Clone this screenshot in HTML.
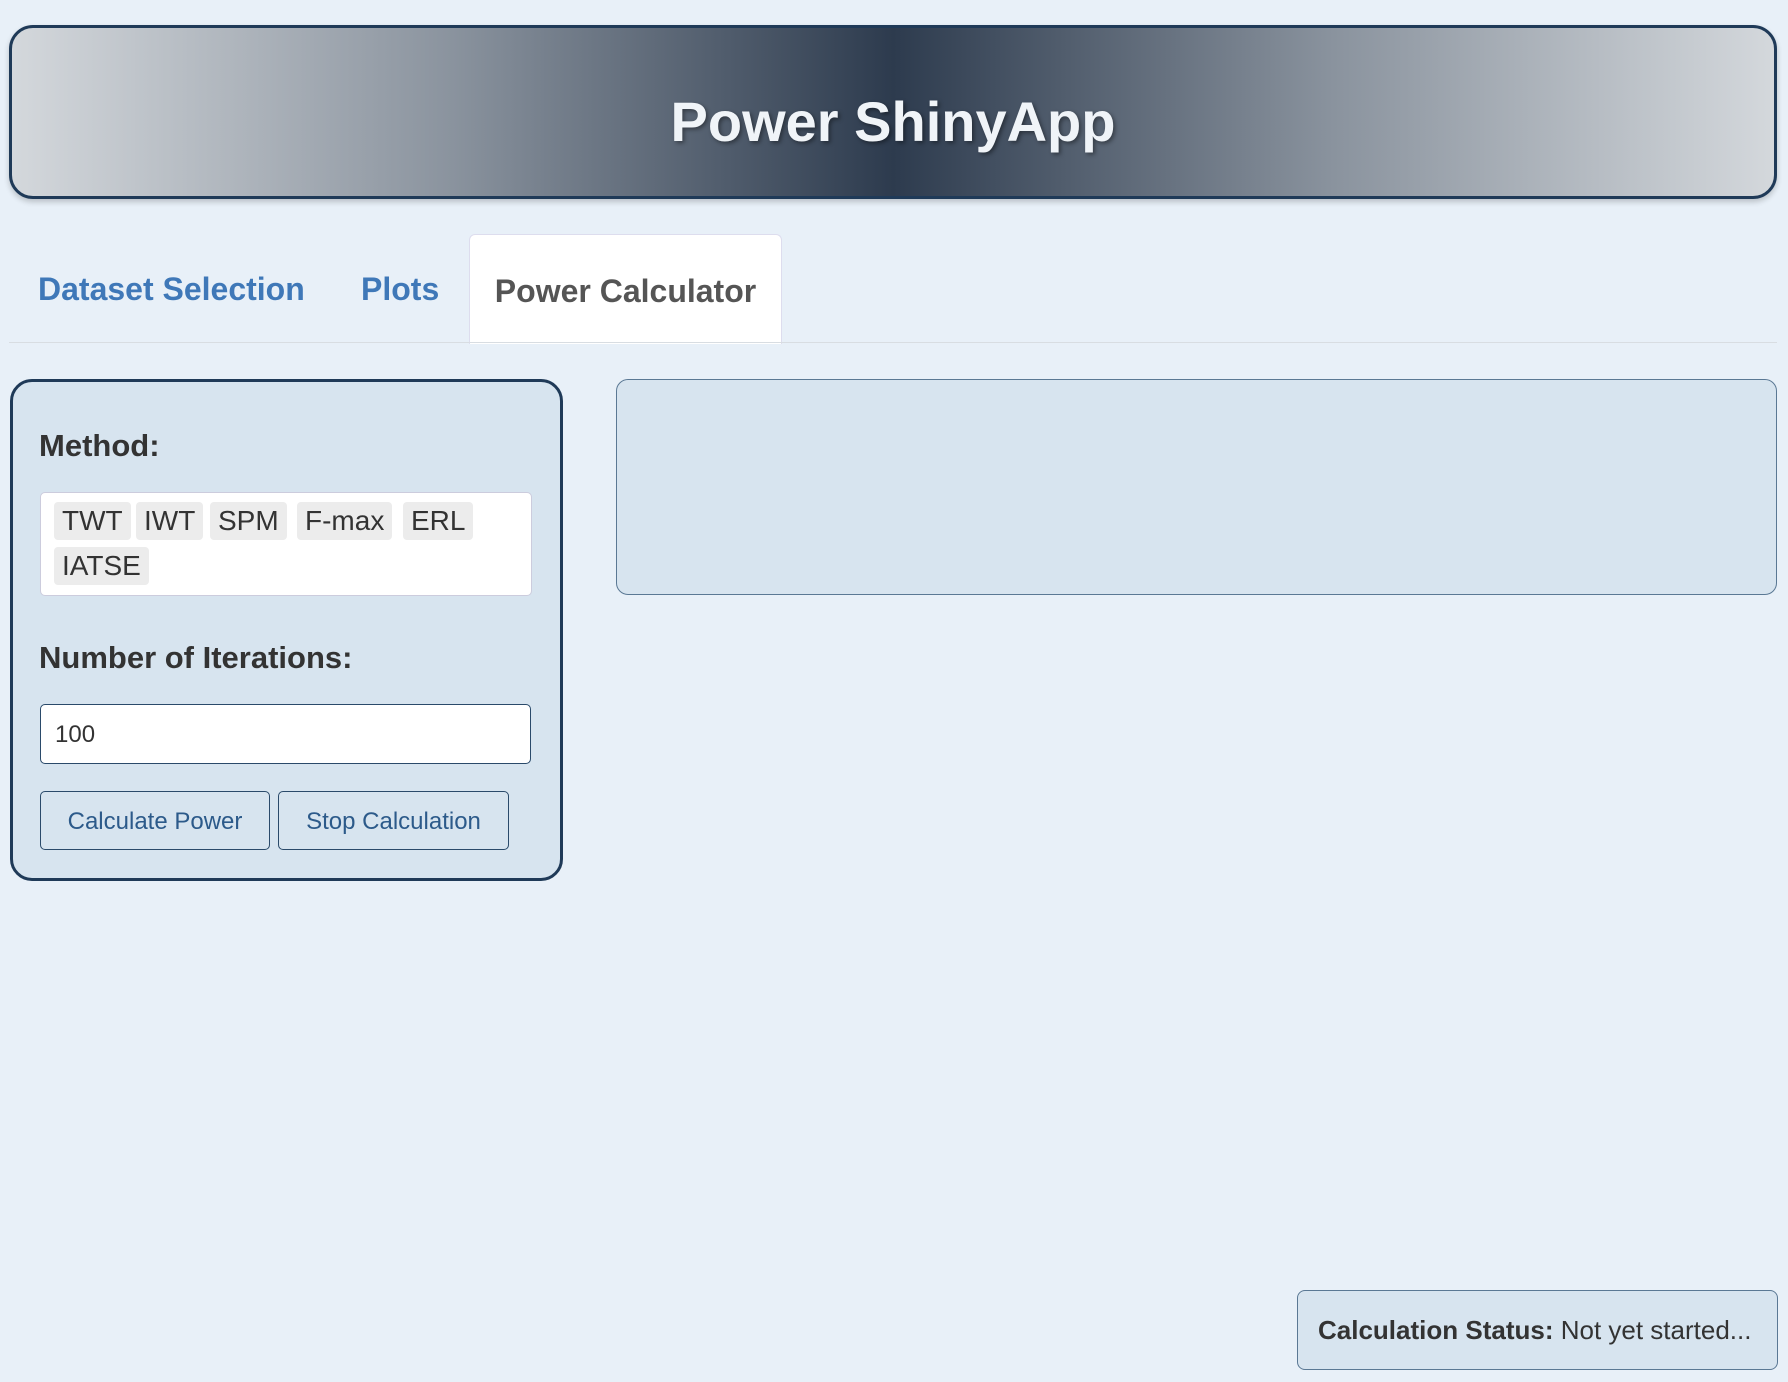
<!DOCTYPE html>
<html><head><meta charset="utf-8"><style>
body{margin:0;width:1788px;height:1382px;background:#e8f0f8;font-family:"Liberation Sans",Arial,sans-serif;position:relative;overflow:hidden}
.hdr{position:absolute;left:9px;top:25px;width:1762px;height:168px;border:3px solid #1f3a58;border-radius:24px;background:linear-gradient(90deg,#d4d8dc 0%,#8a939e 25%,#2d3b4e 50%,#8a939e 75%,#d4d8dc 100%);box-shadow:0 3px 6px rgba(0,0,0,.2);color:#f0f4f8;font-weight:bold;font-size:56px;text-align:center;line-height:188px;text-shadow:2px 2px 4px rgba(0,0,0,.4)}
.tabline{position:absolute;left:9px;top:342px;width:1768px;border-top:1px solid #d8dde2}
.tab{position:absolute;top:271px;font-size:32px;font-weight:bold;color:#3f78b8}
.active{position:absolute;left:469px;top:234px;width:311px;height:109px;background:#fff;border:1px solid #dde;border-bottom:none;border-radius:6px 6px 0 0;color:#555;font-size:32px;font-weight:bold;text-align:center;line-height:112px}
.lp{position:absolute;left:10px;top:379px;width:547px;height:496px;border:3px solid #1f3a58;border-radius:22px;background:#d7e4ef}
.lbl{position:absolute;left:26px;font-size:31px;font-weight:bold;color:#333}
.sel{position:absolute;left:27px;top:110px;width:490px;height:102px;background:#fff;border:1px solid #ccd;border-radius:5px}
.tag{position:absolute;height:38px;line-height:38px;background:#ececec;border-radius:4px;font-size:28px;color:#333;padding:0 8px}
.inp{position:absolute;left:27px;top:322px;width:491px;height:60px;background:#fff;border:1px solid #2a4a6a;border-radius:5px;font-size:24px;line-height:60px;padding-left:14px;box-sizing:border-box;color:#333}
.btn{position:absolute;top:409px;height:59px;border:1px solid #2a4a6a;border-radius:5px;background:#d7e4ef;color:#2c5a8a;font-size:24px;text-align:center;line-height:59px;box-sizing:border-box}
.rp{position:absolute;left:616px;top:379px;width:1161px;height:216px;border:1px solid #5a7894;border-radius:12px;background:#d7e4ef;box-sizing:border-box}
.st{position:absolute;left:1297px;top:1290px;width:481px;height:80px;border:1px solid #5a7894;border-radius:8px;background:#d7e4ef;box-sizing:border-box;font-size:26px;color:#333;line-height:78px;padding-left:20px;white-space:nowrap}
</style></head><body>
<div class="hdr">Power ShinyApp</div>
<div class="tab" style="left:38px">Dataset Selection</div>
<div class="tab" style="left:361px">Plots</div>
<div class="active">Power Calculator</div>
<div class="tabline"></div>
<div class="lp">
<div class="lbl" style="top:46px">Method:</div>
<div class="sel">
<div class="tag" style="left:13px;top:9px">TWT</div>
<div class="tag" style="left:95px;top:9px">IWT</div>
<div class="tag" style="left:169px;top:9px">SPM</div>
<div class="tag" style="left:256px;top:9px">F-max</div>
<div class="tag" style="left:362px;top:9px">ERL</div>
<div class="tag" style="left:13px;top:54px">IATSE</div>
</div>
<div class="lbl" style="top:258px">Number of Iterations:</div>
<div class="inp">100</div>
<div class="btn" style="left:27px;width:230px">Calculate Power</div>
<div class="btn" style="left:265px;width:231px">Stop Calculation</div>
</div>
<div class="rp"></div>
<div class="st"><b>Calculation Status:</b> Not yet started...</div>
</body></html>
